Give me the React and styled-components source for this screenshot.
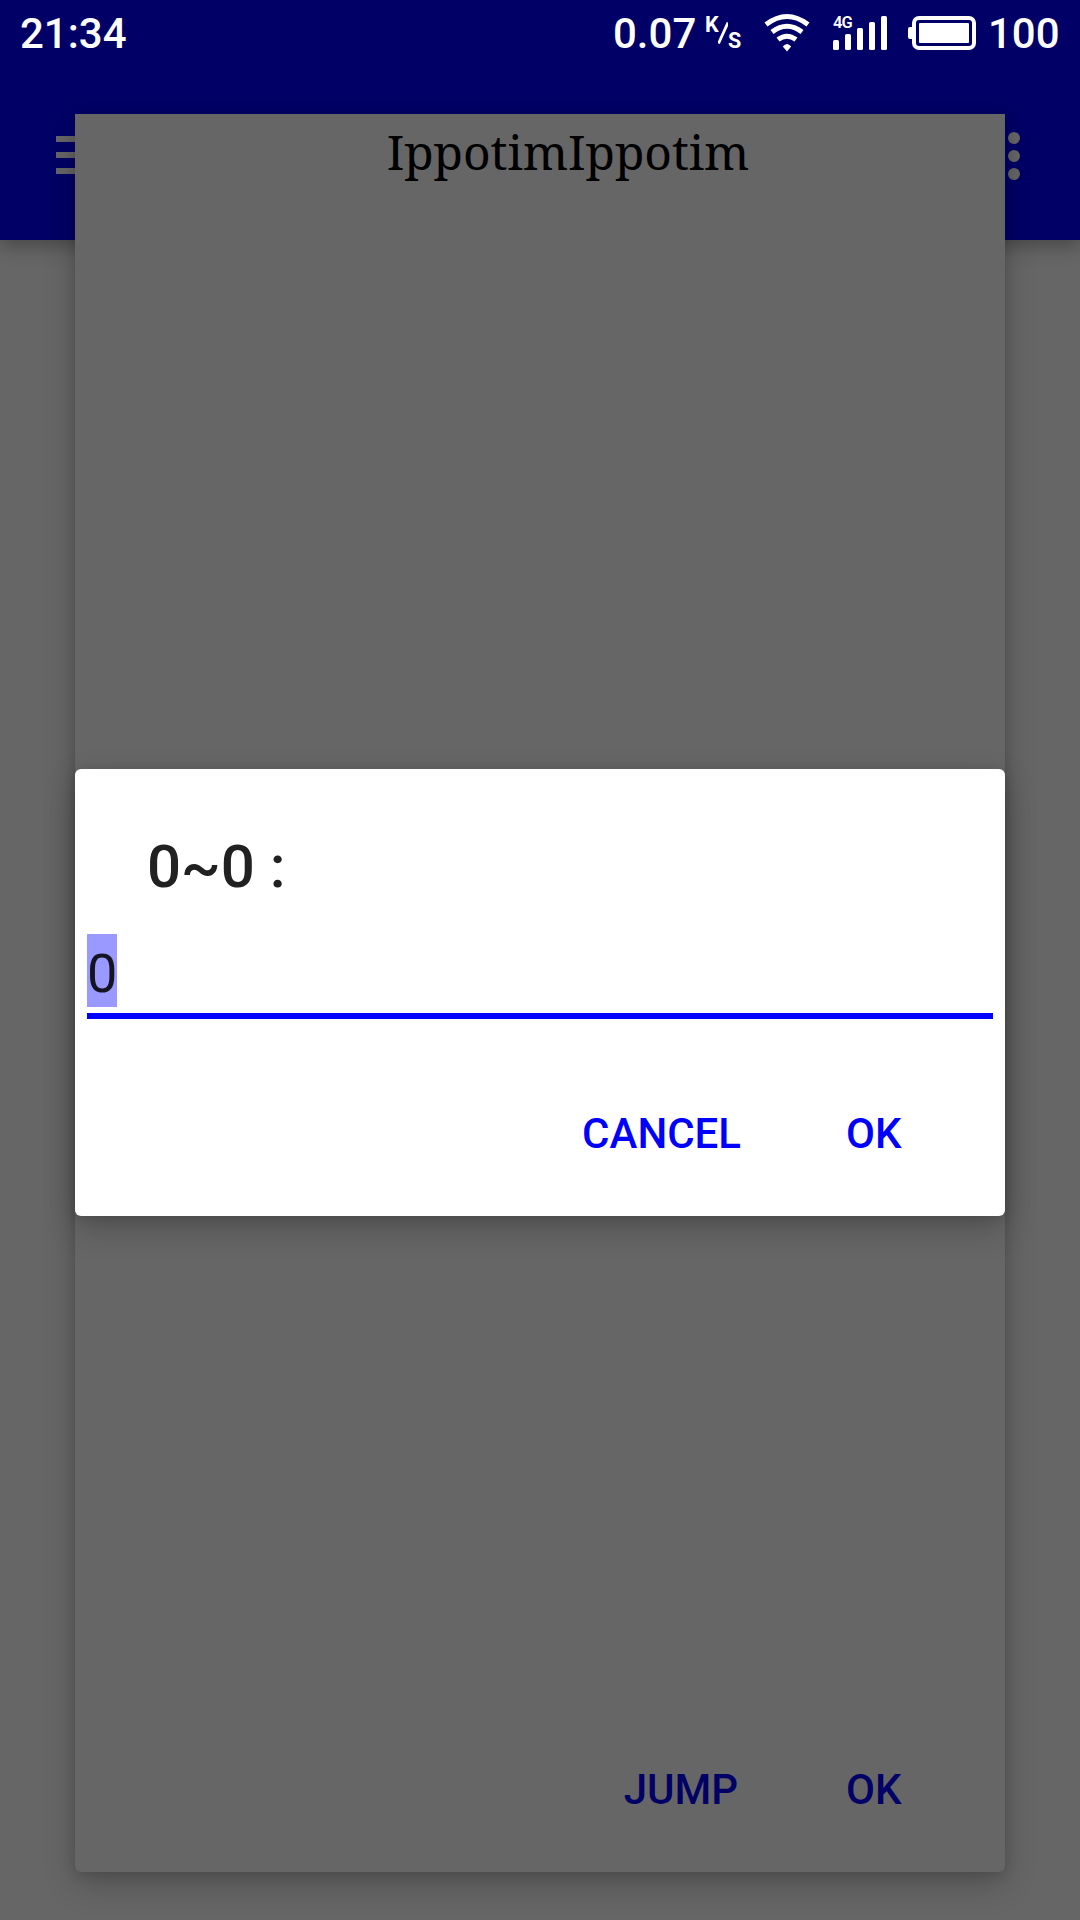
import React from "react";
import styled, { createGlobalStyle } from "styled-components";

const GlobalStyle = createGlobalStyle`
  * { box-sizing: border-box; }
  body { margin: 0; background: #666666; }
`;

const Screen = styled.div`
  display: grid;
  grid-template: 1920px / 1080px;
  width: 1080px;
  height: 1920px;
  overflow: hidden;
  background: #666666;
  font-family: Roboto, "Noto Sans", sans-serif;
`;

const Layer = styled.div`
  grid-area: 1 / 1;
  display: flex;
  flex-direction: column;
  padding: ${(p) => p.$inset || "0"};
`;

const Toolbar = styled.header`
  display: flex;
  justify-content: space-between;
  align-items: center;
  height: 240px;
  padding: 72px 60px 0 56px;
  background: #000066;
  box-shadow: 0 6px 18px rgba(0, 0, 0, 0.3);
`;

const MenuIcon = styled.div`
  display: flex;
  flex-direction: column;
  gap: 10px;
  width: 54px;
  margin-top: -2px;
`;

const MenuBar = styled.span`
  height: 6px;
  background: #666666;
`;

const MoreIcon = styled.div`
  display: flex;
  flex-direction: column;
  gap: 6px;
`;

const Dot = styled.span`
  width: 12px;
  height: 12px;
  border-radius: 50%;
  background: #666666;
`;

const StatusBar = styled.div`
  display: flex;
  align-items: flex-start;
  height: 72px;
  padding: 0 20px;
  color: #ffffff;
`;

const StatusText = styled.span`
  width: ${(p) => p.$width}px;
  margin-left: ${(p) => p.$left || 0}px;
  font-size: 42px;
  font-weight: 500;
  line-height: 67px;
  white-space: nowrap;
`;

const Unit = styled.div`
  display: flex;
  width: 37px;
  height: 60px;
  font-size: 21.5px;
  font-weight: 700;
  line-height: 26px;
`;

const UnitPart = styled.span`
  width: ${(p) => p.$width}px;
  padding-top: ${(p) => p.$top}px;
`;

const UnitSlash = styled.svg`
  width: 10px;
  height: 60px;
`;

const Glyph = styled.svg`
  display: block;
  flex: none;
  width: ${(p) => p.$width}px;
  height: 60px;
  margin-left: ${(p) => p.$left}px;
`;

const Signal = styled.div`
  display: grid;
  width: 56px;
  height: 60px;
  margin-left: 22px;
`;

const NetworkType = styled.span`
  grid-area: 1 / 1;
  padding: 12px 0 0 1px;
  font-size: 16.5px;
  font-weight: 600;
  line-height: 21px;
  letter-spacing: -1px;
`;

const SignalBars = styled.svg`
  grid-area: 1 / 1;
`;

const Dialog = styled.section`
  display: flex;
  flex-direction: column;
  height: ${(p) => p.$height}px;
  border-radius: ${(p) => p.$radius};
  background: ${(p) => p.$bg};
  box-shadow: 0 12px 32px rgba(0, 0, 0, 0.22), 0 2px 12px rgba(0, 0, 0, 0.12);
`;

const PageTitle = styled.h1`
  margin: 0;
  padding: 5px 0 0 56px;
  color: #000000;
  font-family: "Noto Serif", "Droid Serif", "DejaVu Serif Condensed", "DejaVu Serif", serif;
  font-size: 48px;
  font-weight: 400;
  line-height: 66px;
  letter-spacing: -0.08px;
  text-align: center;
`;

const DialogTitle = styled.h2`
  margin: 0;
  padding: 62px 72px 0;
  color: #212121;
  font-size: 60px;
  font-weight: 500;
  line-height: 72px;
`;

const Field = styled.div`
  display: flex;
  height: 85px;
  margin: 31px 12px 0;
  border-bottom: 6px solid #0000ff;
`;

const SelectedValue = styled.span`
  width: 30px;
  height: 73px;
  background: #9999ff;
  color: #141421;
  font-size: 54px;
  line-height: 79px;
`;

const Actions = styled.footer`
  display: flex;
  justify-content: flex-end;
  gap: ${(p) => p.$gap}px;
  margin-top: auto;
  padding: 0 103.5px 49px 0;
`;

const Action = styled.button`
  padding: 0;
  border: 0;
  background: none;
  color: ${(p) => p.$color};
  font-family: inherit;
  font-size: 42px;
  font-weight: 500;
  line-height: 66px;
`;

export default function App() {
  return (
    <Screen>
      <GlobalStyle />
      <Layer>
        <Toolbar>
          <MenuIcon>
            <MenuBar />
            <MenuBar />
            <MenuBar />
          </MenuIcon>
          <MoreIcon>
            <Dot />
            <Dot />
            <Dot />
          </MoreIcon>
        </Toolbar>
      </Layer>

      <Layer $inset="114px 75px 0">
        <Dialog $height={1758} $radius="0 0 6px 6px" $bg="#666666">
          <PageTitle>IppotimIppotim</PageTitle>
          <Actions $gap={108}>
            <Action $color="#000066">JUMP</Action>
            <Action $color="#000066">OK</Action>
          </Actions>
        </Dialog>
      </Layer>

      <Layer $inset="769px 75px 0">
        <Dialog $height={447} $radius="6px" $bg="#ffffff">
          <DialogTitle>0~0 :</DialogTitle>
          <Field>
            <SelectedValue>0</SelectedValue>
          </Field>
          <Actions $gap={105}>
            <Action $color="#0000ff">CANCEL</Action>
            <Action $color="#0000ff">OK</Action>
          </Actions>
        </Dialog>
      </Layer>

      <Layer>
        <StatusBar>
          <StatusText $width={593}>21:34</StatusText>
          <StatusText $width={92}>0.07</StatusText>
          <Unit>
            <UnitPart $top={12} $width={13}>K</UnitPart>
            <UnitSlash viewBox="0 0 10 60">
              <path d="M0.500 43.500L10 22.500" stroke="#fff" strokeWidth="2.800" />
            </UnitSlash>
            <UnitPart $top={28} $width={12}>S</UnitPart>
          </Unit>
          <Glyph $width={46} $left={22} viewBox="764 0 46 60">
            <g fill="none" stroke="#fff" strokeWidth="5">
              <path d="M766 24.500Q787 8.500 808 24.500" />
              <path d="M772 32Q787 20.500 802 32" />
              <path d="M778 39.500Q787 33 796 39.500" />
            </g>
            <path d="M787 51.500L782.800 46.500Q787 41.500 791.200 46.500Z" fill="#fff" />
          </Glyph>
          <Signal>
            <NetworkType>4G</NetworkType>
            <SignalBars width="56" height="60" viewBox="832 0 56 60" fill="#fff">
              <rect x="833" y="40" width="6" height="10" rx="1.500" />
              <rect x="845" y="34" width="6" height="16" rx="1.500" />
              <rect x="857" y="28" width="6" height="22" rx="1.500" />
              <rect x="869" y="22" width="6" height="28" rx="1.500" />
              <rect x="881" y="16" width="6" height="34" rx="1.500" />
            </SignalBars>
          </Signal>
          <Glyph $width={70} $left={19} viewBox="907 0 70 60">
            <rect x="908" y="27" width="7" height="12" rx="2" fill="#fff" />
            <rect x="914" y="18" width="60" height="30" rx="5" fill="#000066" stroke="#fff" strokeWidth="4" />
            <rect x="919" y="23" width="50" height="20" rx="1" fill="#fff" />
          </Glyph>
          <StatusText $width={72} $left={11}>100</StatusText>
        </StatusBar>
      </Layer>
    </Screen>
  );
}
